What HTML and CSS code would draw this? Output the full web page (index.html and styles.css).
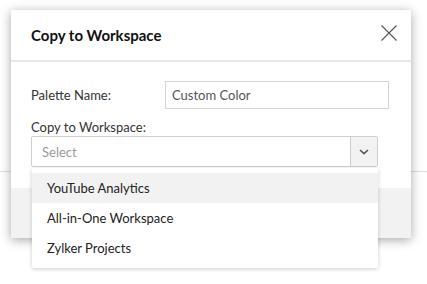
FILE: index.html
```html
<!DOCTYPE html>
<html lang="en">

<head>
    <meta charset="UTF-8">
    <meta name="viewport" content="width=device-width, initial-scale=1.0">
    <title>Copy to Workspace</title>
    <link rel="stylesheet" href="styles.css">
</head>

<body>
    <div class="backdrop"></div>

    <div class="modal">
        <header class="modal-header">
            <h1>Copy to Workspace</h1>
            <button class="close-btn" aria-label="Close">
                <svg width="16" height="16" viewBox="0 0 16 16">
                    <path d="M0.5 0.5 L15.5 15.5 M15.5 0.5 L0.5 15.5" stroke="#555" stroke-width="1.1" fill="none"/>
                </svg>
            </button>
        </header>

        <section class="modal-body">
            <div class="form-row">
                <label for="palette-name">Palette Name:</label>
                <input type="text" id="palette-name" value="Custom Color">
            </div>

            <div class="form-group">
                <label>Copy to Workspace:</label>
                <div class="select-box">
                    <span class="select-value">Select</span>
                    <span class="select-arrow">
                        <svg width="10" height="6" viewBox="0 0 10 6">
                            <path d="M1 1 L5 4.6 L9 1" stroke="#555" stroke-width="1.6" fill="none"/>
                        </svg>
                    </span>

                    <ul class="dropdown">
                        <li class="active">YouTube Analytics</li>
                        <li>All-in-One Workspace</li>
                        <li>Zylker Projects</li>
                    </ul>
                </div>
            </div>
        </section>

        <footer class="modal-footer"></footer>
    </div>
</body>

</html>
```

FILE: styles.css
```css
body {
    font-family: Lato, 'Open Sans', sans-serif;
    margin: 0;
    padding: 0;
    background-color: #fff;
    color: #333;
}

.backdrop {
    height: 171px;
    border-bottom: 1px solid #dcdcdc;
}

.modal {
    position: absolute;
    top: 10px;
    left: 11px;
    width: 400px;
    background-color: #fff;
    box-shadow: 0 2px 10px rgba(0, 0, 0, 0.35);
}

.modal-header {
    display: flex;
    align-items: center;
    justify-content: space-between;
    height: 50px;
    padding: 0 14px 0 20px;
    border-bottom: 2px solid #e8e8e8;
}

.modal-header h1 {
    margin: 0;
    font-size: 15px;
    font-weight: 700;
    color: #111;
}

.close-btn {
    background: none;
    border: none;
    padding: 0;
    width: 16px;
    height: 16px;
    margin-top: -4px;
    cursor: pointer;
}

.close-btn svg {
    display: block;
}

.modal-body {
    height: 126px;
    box-sizing: border-box;
    padding: 19px 22px 0 20px;
    font-size: 13px;
}

.form-row {
    display: flex;
    align-items: center;
}

.form-row label {
    width: 134px;
    color: #333;
}

.form-row input {
    width: 224px;
    height: 28px;
    box-sizing: border-box;
    padding: 0 6px;
    border: 1px solid #d4d4d4;
    font-family: inherit;
    font-size: 13px;
    color: #555;
    outline: none;
}

.form-group {
    margin-top: 10px;
}

.form-group label {
    display: block;
    line-height: 17px;
    color: #333;
}

.select-box {
    position: relative;
    display: flex;
    width: 347px;
    height: 31px;
    box-sizing: border-box;
    border: 1px solid #cfcfcf;
    border-radius: 2px;
}

.select-value {
    flex: 1;
    display: flex;
    align-items: center;
    padding-left: 10px;
    color: #999;
}

.select-arrow {
    display: flex;
    align-items: center;
    justify-content: center;
    width: 26px;
    border-left: 1px solid #cfcfcf;
    background-color: #f2f2f2;
}

.dropdown {
    position: absolute;
    top: 31px;
    left: 0;
    right: -1px;
    margin: 0;
    padding: 5px 0;
    list-style: none;
    background-color: #fff;
    border-radius: 2px;
    box-shadow: 0 1px 4px rgba(0, 0, 0, 0.2);
    z-index: 2;
}

.dropdown li {
    height: 30px;
    line-height: 30px;
    padding-left: 15px;
    color: #222;
}

.dropdown li.active {
    background-color: #f2f2f2;
}

.modal-footer {
    height: 50px;
    background-color: #f2f2f2;
}
```
